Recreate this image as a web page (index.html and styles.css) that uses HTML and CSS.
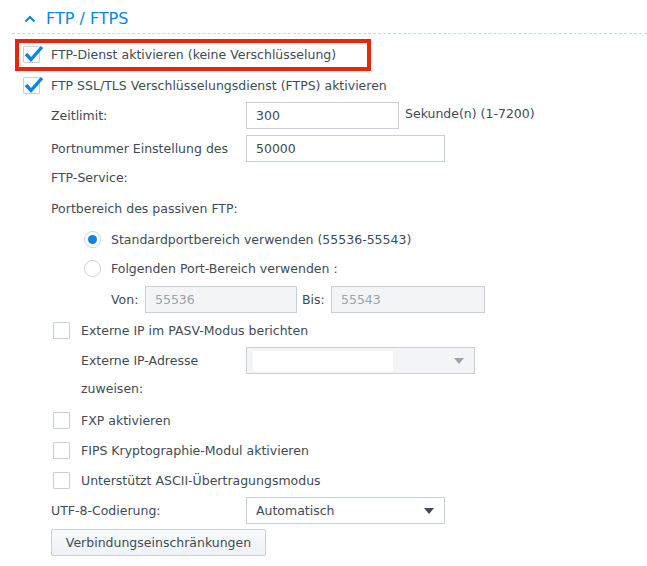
FILE: index.html
```html
<!DOCTYPE html>
<html lang="de">
<head>
<meta charset="utf-8">
<title>FTP / FTPS</title>
<link rel="stylesheet" href="styles.css">
</head>
<body>
<div class="section">
  <div class="section-head">
    <svg class="chevron" width="12" height="8" viewBox="0 0 12 8"><polyline points="1.5,6.5 6,2 10.5,6.5" fill="none" stroke="#0a86e0" stroke-width="2"/></svg>
    <span class="section-title">FTP / FTPS</span>
  </div>
  <div class="body">
    <div class="check-row highlight">
      <span class="cb checked"><svg viewBox="0 0 22 20" width="22" height="20"><polyline points="3,10 8,15.5 19,3" fill="none" stroke="#0a86e0" stroke-width="3.4" stroke-linejoin="miter"/></svg></span>
      <span class="cb-label">FTP-Dienst aktivieren (keine Verschlüsselung)</span>
    </div>
    <div class="check-row">
      <span class="cb checked"><svg viewBox="0 0 22 20" width="22" height="20"><polyline points="3,10 8,15.5 19,3" fill="none" stroke="#0a86e0" stroke-width="3.4" stroke-linejoin="miter"/></svg></span>
      <span class="cb-label">FTP SSL/TLS Verschlüsselungsdienst (FTPS) aktivieren</span>
    </div>

    <div class="field f-zeit">
      <div class="flabel">Zeitlimit:</div>
      <div class="input w153">300</div>
      <div class="suffix">Sekunde(n) (1-7200)</div>
    </div>
    <div class="field f-port">
      <div class="flabel">Portnummer Einstellung des<br>FTP-Service:</div>
      <div class="input w199">50000</div>
    </div>
    <div class="plain-row">Portbereich des passiven FTP:</div>

    <div class="radio-row first">
      <span class="radio on"></span>
      <span class="cb-label">Standardportbereich verwenden (55536-55543)</span>
    </div>
    <div class="radio-row">
      <span class="radio"></span>
      <span class="cb-label">Folgenden Port-Bereich verwenden :</span>
    </div>
    <div class="range-row">
      <span class="rlabel">Von:</span>
      <div class="input disabled w152">55536</div>
      <span class="rlabel bis">Bis:</span>
      <div class="input disabled w154">55543</div>
    </div>

    <div class="check-row sub gap">
      <span class="cb"></span>
      <span class="cb-label">Externe IP im PASV-Modus berichten</span>
    </div>
    <div class="field f-ext">
      <div class="flabel sublabel">Externe IP-Adresse<br>zuweisen:</div>
      <div class="select light w229"><span class="redact"></span><span class="arrow grey"></span></div>
    </div>
    <div class="check-row sub gap">
      <span class="cb"></span>
      <span class="cb-label">FXP aktivieren</span>
    </div>
    <div class="check-row sub">
      <span class="cb"></span>
      <span class="cb-label">FIPS Kryptographie-Modul aktivieren</span>
    </div>
    <div class="check-row sub">
      <span class="cb"></span>
      <span class="cb-label">Unterstützt ASCII-Übertragungsmodus</span>
    </div>
    <div class="field f-utf">
      <div class="flabel">UTF-8-Codierung:</div>
      <div class="select w199"><span class="sel-text">Automatisch</span><span class="arrow"></span></div>
    </div>
    <button class="btn">Verbindungseinschränkungen</button>
  </div>
</div>
</body>
</html>
```

FILE: styles.css
```css
*, *::before, *::after { box-sizing: border-box; }
html, body { margin: 0; padding: 0; background: #fff; }
body {
  font-family: "DejaVu Sans", Verdana, sans-serif;
  font-size: 12.5px;
  color: #414b55;
  width: 647px;
  height: 566px;
  overflow: hidden;
}
.section { padding-left: 12px; }
.section-head {
  height: 34px;
  display: flex;
  align-items: center;
  padding-left: 12px;
  border-bottom: 1px dashed #c9d6e2;
}
.chevron { margin-top: 4px; margin-right: 10px; }
.section-title {
  font-size: 16px;
  color: #0a86e0;
  margin-top: 4px;
}
.body { padding-top: 5px; }

.check-row {
  height: 31px;
  display: flex;
  align-items: center;
  padding-left: 11px;
  position: relative;
}
.check-row.sub { height: 30px; padding-left: 41px; }
.check-row.gap { margin-top: 2px; }
.check-row.highlight::after {
  content: "";
  position: absolute;
  left: 3px;
  top: 0;
  width: 356px;
  height: 32px;
  border: 4px solid #e8260f;
}
.cb {
  width: 17px;
  height: 17px;
  border: 1px solid #c7d0da;
  border-radius: 1px;
  position: relative;
  flex: none;
  margin-right: 11px;
  background: #fff;
}
.cb svg { position: absolute; left: -1px; top: -3px; }
.cb-label { white-space: nowrap; }

.field { display: flex; align-items: flex-start; padding-left: 39px; }
.flabel { width: 195px; line-height: 29px; flex: none; }
.flabel.sublabel { width: 165px; line-height: 28px; margin-left: 30px; }
.f-zeit { height: 29px; }
.f-port { margin-top: 4px; height: 58px; }
.f-ext { height: 56px; margin-top: 2px; }
.f-utf { margin-top: 2px; height: 28px; }
.input {
  height: 27px;
  margin-top: 1px;
  border: 1px solid #c7d0da;
  padding-left: 9px;
  line-height: 25px;
  background: #fff;
  flex: none;
}
.f-utf .flabel { line-height: 28px; }
.input.disabled { background: #f2f4f6; color: #9aa3ac; }
.w152 { width: 152px; }
.w153 { width: 153px; }
.w154 { width: 154px; }
.w199 { width: 199px; }
.w229 { width: 229px; }
.suffix { margin-left: 6px; line-height: 25px; }
.plain-row { padding-left: 39px; line-height: 29px; height: 29px; margin-top: 2px; }

.radio-row {
  height: 29px;
  display: flex;
  align-items: center;
  padding-left: 72px;
}
.radio-row.first { margin-top: 2px; }
.radio {
  width: 17px;
  height: 17px;
  border: 1px solid #c7d0da;
  border-radius: 50%;
  margin-right: 10px;
  flex: none;
  display: flex;
  align-items: center;
  justify-content: center;
  background: #fff;
}
.radio.on::after {
  content: "";
  width: 9px;
  height: 9px;
  border-radius: 50%;
  background: #0a86e0;
}
.range-row {
  display: flex;
  align-items: center;
  height: 28px;
  padding-left: 99px;
  margin-top: 2px;
}
.range-row .input { margin-top: 0; }
.rlabel { width: 34px; }
.rlabel.bis { width: 29px; margin-left: 5px; }

.select {
  height: 27px;
  border: 1px solid #c7d0da;
  background: #fff;
  display: flex;
  align-items: center;
  justify-content: space-between;
  padding: 0 10px 0 9px;
  flex: none;
}
.select.light { background: #f2f4f6; padding-left: 6px; }
.redact { width: 140px; height: 20px; background: #fff; }
.arrow {
  width: 0; height: 0;
  border-left: 5px solid transparent;
  border-right: 5px solid transparent;
  border-top: 6px solid #414b55;
}
.arrow.grey { border-top-color: #9aa3ad; }

.btn {
  display: block;
  margin: 4px 0 0 39px;
  width: 215px;
  height: 27px;
  border: 1px solid #c7d0da;
  border-radius: 2px;
  background: linear-gradient(#f8fafc, #eef2f6);
  font-family: inherit;
  font-size: 12.5px;
  color: #414b55;
  padding: 0;
}
```
